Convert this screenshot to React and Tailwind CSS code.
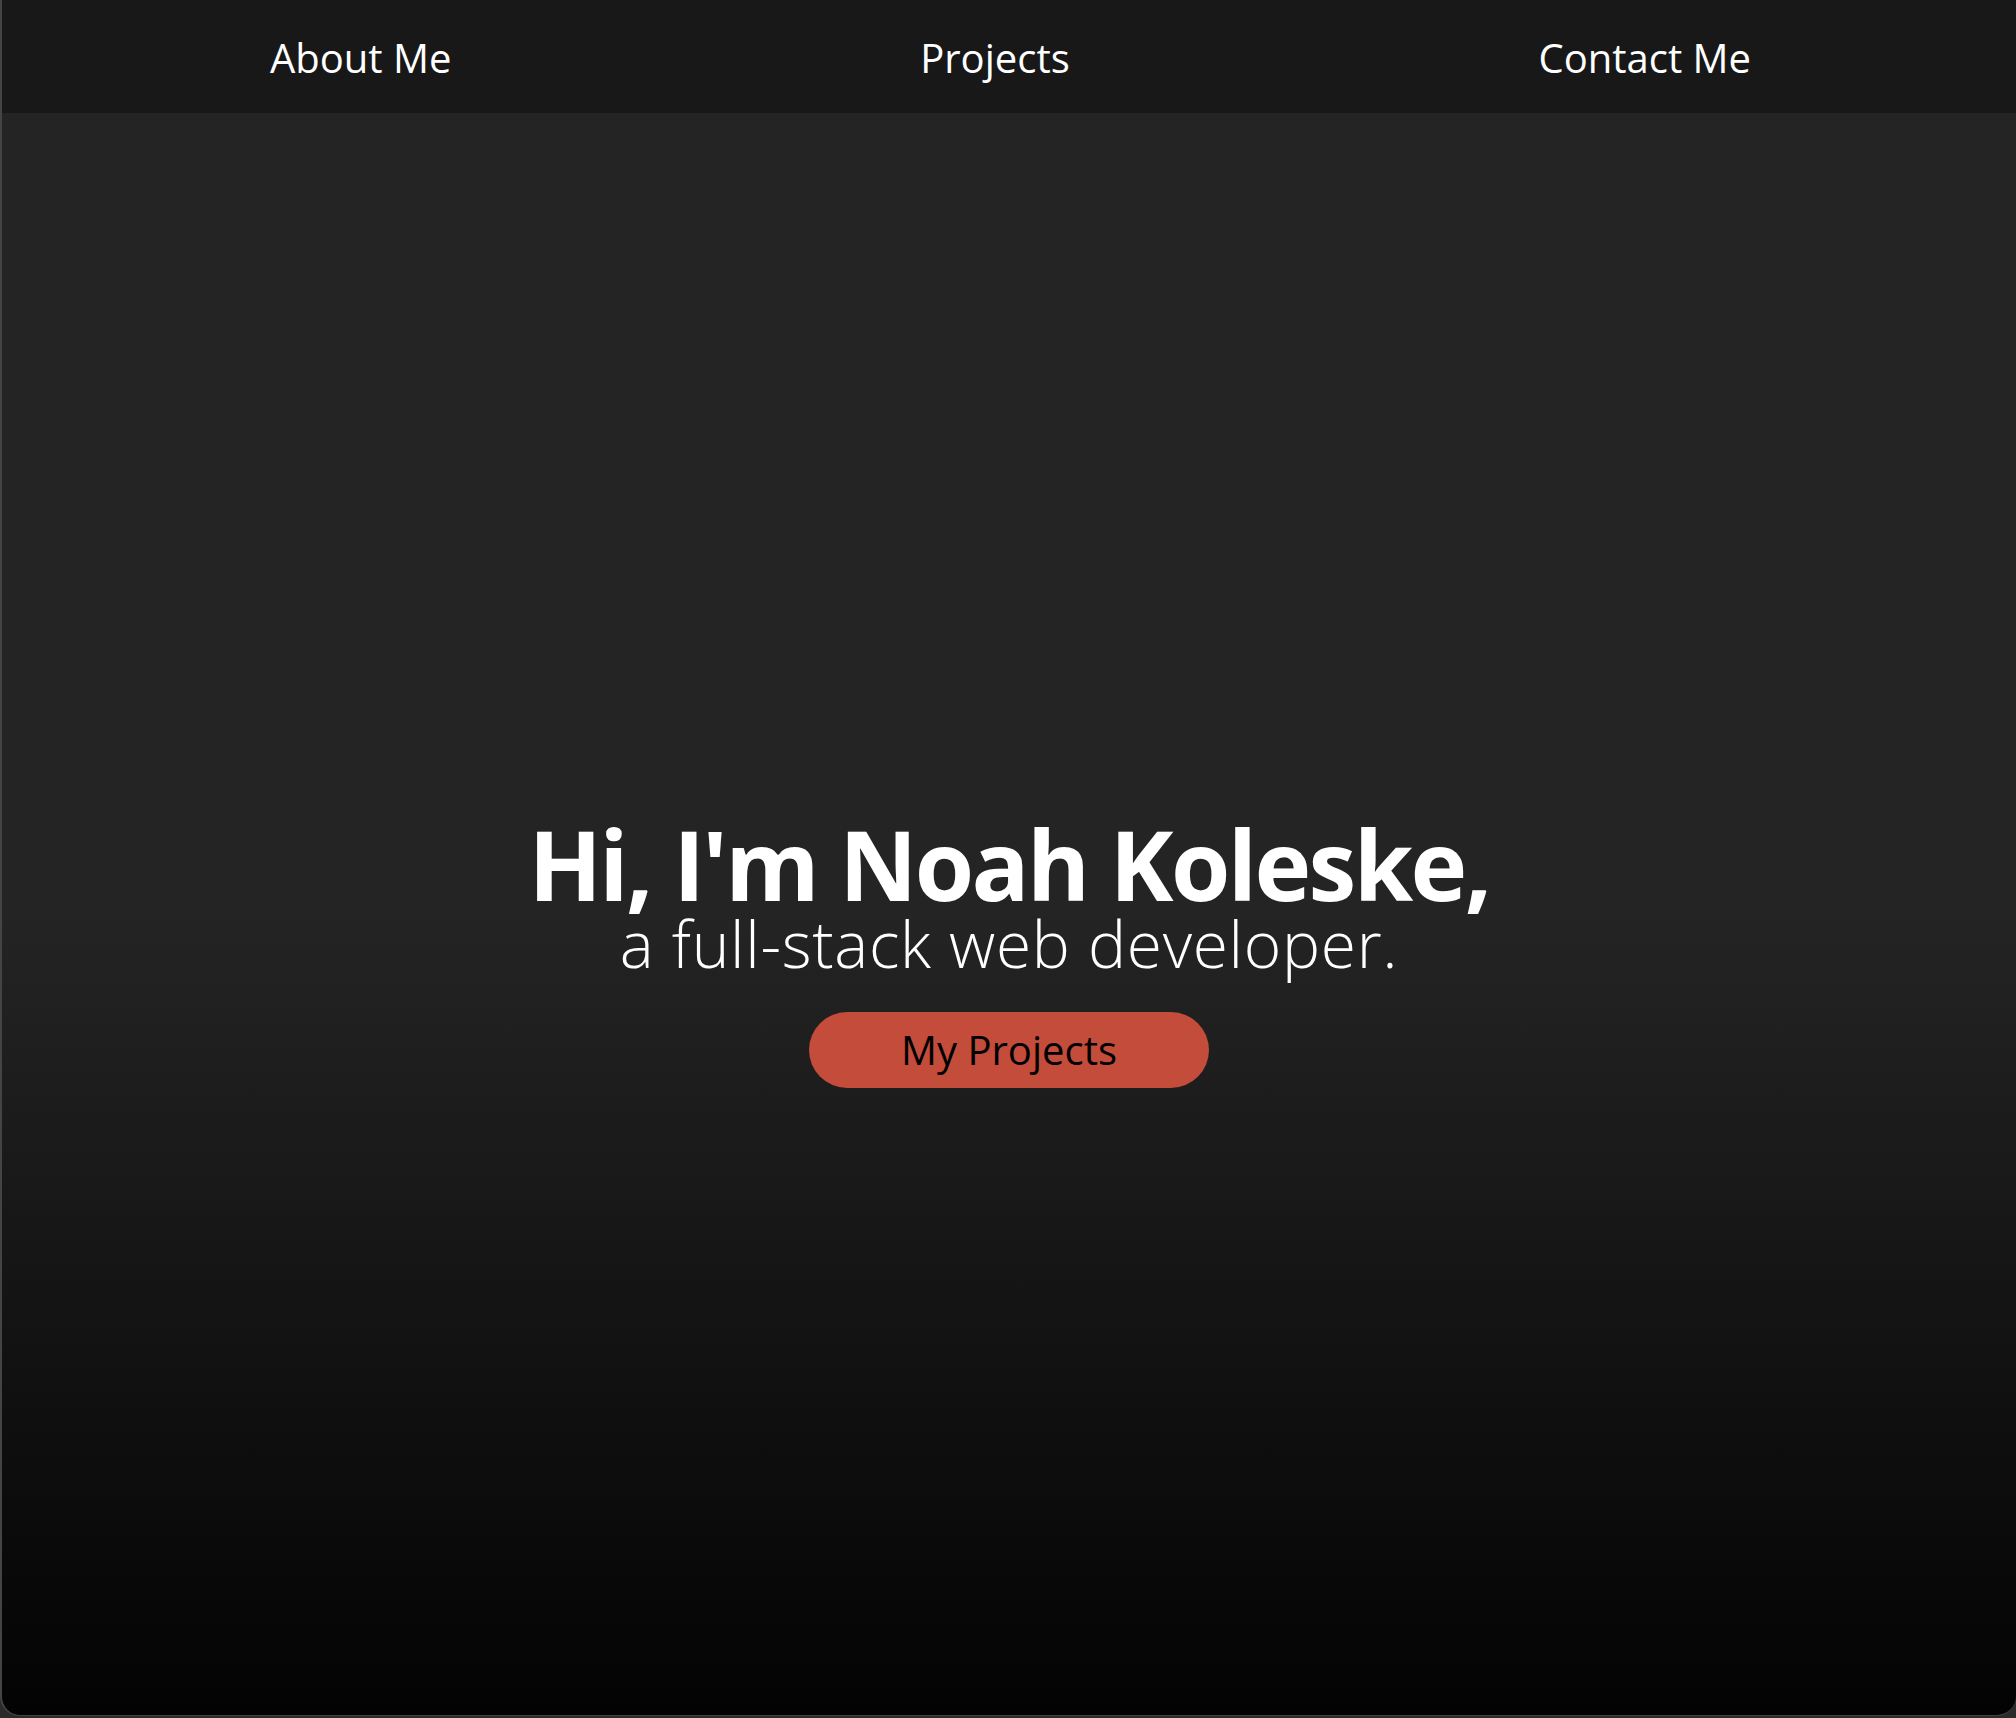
const links = ['About Me', 'Projects', 'Contact Me'];

const App = () => {
  return (
    <div className="h-[1718px] w-full bg-[#2b2b2b] font-['Open_Sans',sans-serif]">
      <div className="flex h-[1716px] flex-col overflow-hidden rounded-b-[20px] border-b border-l-2 border-[#444444]">
        <nav className="flex h-[113px] shrink-0 items-center justify-between bg-[#181818] pl-[268px] pr-[265px] pt-[2px]">
          {links.map((link) => (
            <a key={link} href="#" className="text-[40px] leading-none text-white">
              {link}
            </a>
          ))}
        </nav>

        <main className="flex flex-1 flex-col items-center bg-[linear-gradient(to_bottom,#242424_50%,#030303)] pt-[706px] text-white">
          <h1 className="text-[96px] font-bold leading-[90px] tracking-[-2.6px]">Hi, I'm Noah Koleske,</h1>
          <p className="mt-[3px] text-[64px] font-light leading-none tracking-[0.7px]">a full-stack web developer.</p>
          <button className="mt-[36px] h-[76px] w-[400px] rounded-full bg-[#c44c3a] text-[40px] text-black">
            My Projects
          </button>
        </main>
      </div>
    </div>
  );
};

export default App;
